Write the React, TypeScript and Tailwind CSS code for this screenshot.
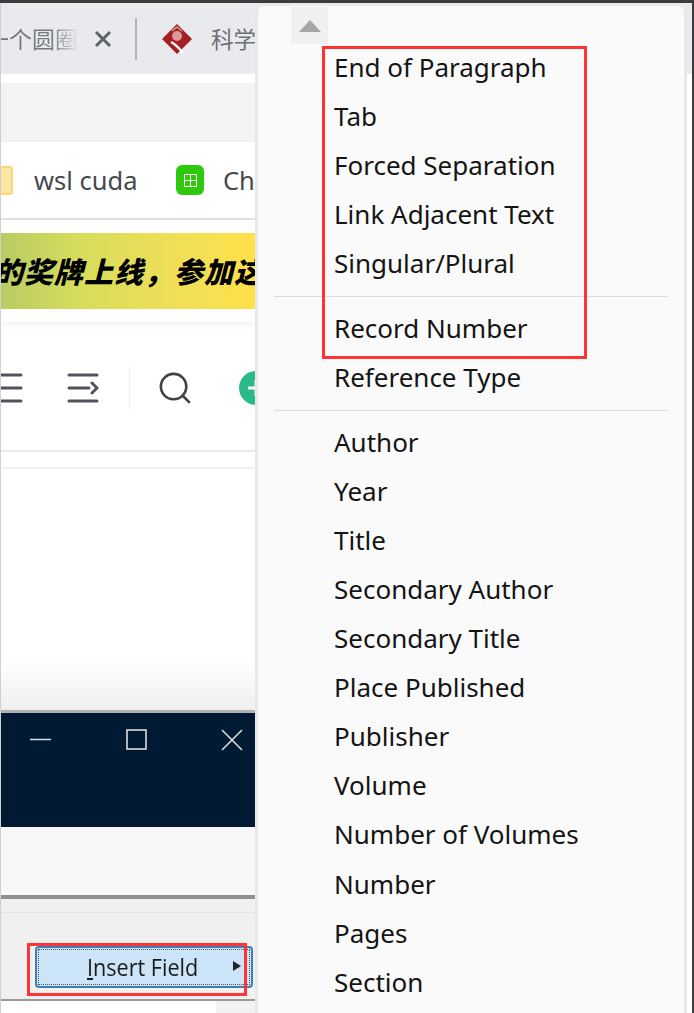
const GROUPS = [
  ["End of Paragraph", "Tab", "Forced Separation", "Link Adjacent Text", "Singular/Plural"],
  ["Record Number", "Reference Type"],
  [
    "Author",
    "Year",
    "Title",
    "Secondary Author",
    "Secondary Title",
    "Place Published",
    "Publisher",
    "Volume",
    "Number of Volumes",
    "Number",
    "Pages",
    "Section",
  ],
];

const CJK = "font-['Noto_Sans_CJK_SC',sans-serif]";

function TabBar() {
  return (
    <div className={"flex items-center h-[71px] bg-[#e8eaed] shrink-0 " + CJK}>
      <span className="ml-[-15px] w-[93px] shrink-0 overflow-hidden whitespace-nowrap bg-[linear-gradient(90deg,#75797e_70%,#e8eaed_100%)] bg-clip-text text-[23px] text-transparent">
        一个圆圈
      </span>
      <svg width="18" height="18" viewBox="0 0 18 18" className="ml-[15px] shrink-0 text-[#5f6368]">
        <path d="M2 2L16 16M16 2L2 16" stroke="currentColor" strokeWidth="3" />
      </svg>
      <div className="ml-[23px] h-[42px] w-[2px] bg-[#b3b5b8] shrink-0" />
      <svg width="32" height="32" viewBox="0 0 32 32" className="ml-[24px] shrink-0">
        <path d="M16 1 L31 16 L16 31 L1 16 Z" fill="#a31f24" />
        <circle cx="16" cy="13" r="5" fill="#d99a9c" />
        <path d="M11 8L16 4L21 8" stroke="#d99a9c" strokeWidth="1.5" fill="none" />
        <path d="M10 19 C14 21 18 25 22 30" stroke="#fff" strokeWidth="2.5" fill="none" />
      </svg>
      <span className="ml-[18px] whitespace-nowrap text-[22.5px] text-[#6d7075]">科学</span>
    </div>
  );
}

function Bookmarks() {
  return (
    <div className="flex items-center h-[78px] bg-white border-b-2 border-[#e0e0e0] shrink-0 font-['Noto_Sans',sans-serif]">
      <div className="ml-[-13px] h-[29px] w-[25px] rounded-[3px] border-2 border-[#fbd778] bg-[#fde7a4] shrink-0" />
      <span className="ml-[21px] w-[103px] text-[25.5px] text-[#45494f] whitespace-nowrap shrink-0">wsl cuda</span>
      <div className="ml-[39px] flex items-center justify-center h-[30px] w-[28px] rounded-[6px] bg-[#2ec90c] shrink-0">
        <div className="grid grid-cols-2 gap-px h-[13px] w-[13px] border border-white bg-white">
          <div className="bg-[#2ec90c]" />
          <div className="bg-[#2ec90c]" />
          <div className="bg-[#2ec90c]" />
          <div className="bg-[#2ec90c]" />
        </div>
      </div>
      <span className="ml-[19px] text-[25.5px] text-[#45494f]">Ch</span>
    </div>
  );
}

function Toolbar() {
  return (
    <div className="flex items-center h-[130px] pt-[4px] bg-white border-b-2 border-[#e8e8e8] shrink-0">
      <svg width="22" height="30" viewBox="0 0 22 30" className="shrink-0 text-[#50545a]">
        <path d="M0 2H20M0 15H20M0 28H20" stroke="currentColor" strokeWidth="3" strokeLinecap="round" />
      </svg>
      <svg width="32" height="30" viewBox="0 0 32 30" className="ml-[44px] shrink-0 text-[#50545a]">
        <path d="M2 2H30M2 15H22M2 28H30M25 10L30 15L25 20" stroke="currentColor" strokeWidth="3" strokeLinecap="round" fill="none" />
      </svg>
      <div className="ml-[30px] h-[42px] w-px bg-[#eeeeee] shrink-0" />
      <svg width="32" height="32" viewBox="0 0 34 34" className="ml-[29px] shrink-0 text-[#3f4348]">
        <circle cx="15.5" cy="15.5" r="13.5" stroke="currentColor" strokeWidth="2.8" fill="none" />
        <path d="M25 25L32 32" stroke="currentColor" strokeWidth="2.8" strokeLinecap="round" />
      </svg>
      <div className="ml-[48px] flex items-center justify-center h-[34px] w-[34px] rounded-full bg-[#2bb98a] shrink-0">
        <svg width="20" height="20" viewBox="0 0 20 20" className="text-white">
          <path d="M10 2V18M2 10H18" stroke="currentColor" strokeWidth="3" />
        </svg>
      </div>
    </div>
  );
}

function EditorWindow() {
  return (
    <>
      <div className="flex items-start h-[117px] bg-[#001a33] border-t-[3px] border-[#b0b0b0] text-[#dddddd] shrink-0 pl-[29px] pt-[16px]">
        <svg width="21" height="21" viewBox="0 0 21 21" className="shrink-0">
          <path d="M0 10.5H21" stroke="currentColor" strokeWidth="1.5" />
        </svg>
        <svg width="21" height="21" viewBox="0 0 21 21" className="ml-[75px] shrink-0">
          <rect x="1" y="1" width="19" height="19" stroke="currentColor" strokeWidth="1.6" fill="none" />
        </svg>
        <svg width="22" height="22" viewBox="0 0 22 22" className="ml-[74px] shrink-0">
          <path d="M1 1L21 21M21 1L1 21" stroke="currentColor" strokeWidth="1.6" />
        </svg>
      </div>
      <div className="h-[72px] bg-[#f7f7f7] border-b-4 border-[#909090] shrink-0" />
      <div className="h-[100px] bg-[#f0f0f0] shrink-0">
        <div className="h-[14px] border-b border-[#e4e4e4]" />
        <button className="relative ml-[34px] mt-[33px] flex items-center h-[42px] w-[218px] rounded-[4px] border-2 border-[#3d7fb8] bg-[#cce4f7] text-[#1a1a1a] text-[24px] font-['Open_Sans',sans-serif]">
          <span className="absolute inset-[1px] border border-dotted border-[#555555]" />
          <span className="ml-[50px] scale-x-[0.9] origin-left whitespace-nowrap">
            <span className="underline">I</span>nsert Field
          </span>
          <span className="absolute right-[10px] top-[13px] border-y-[5px] border-l-[8px] border-y-transparent border-l-[#222222]" />
        </button>
      </div>
      <div className="flex flex-1 border-t-2 border-[#999999] bg-[#f2f2f2] pr-[3px]">
        <div className="w-[215px] bg-white" />
      </div>
    </>
  );
}

function Browser() {
  return (
    <div className="flex flex-col h-full w-[255px] shrink-0 border-l border-[#d0d0d0] overflow-hidden bg-white">
      <TabBar />
      <div className="h-[9px] bg-white shrink-0" />
      <div className="h-[59px] bg-[#f1f3f4] shrink-0" />
      <Bookmarks />
      <div className="h-[13px] bg-white shrink-0" />
      <div className="flex items-center h-[76px] bg-[linear-gradient(90deg,#b9cc63_0%,#d6dc5c_30%,#f0df57_70%,#ffe04a_100%)] overflow-hidden shrink-0">
        <span className={"ml-[-7px] whitespace-nowrap text-[29px] tracking-[1px] font-black italic text-black " + CJK}>的奖牌上线，参加这</span>
      </div>
      <div className="relative h-[13px] bg-white shadow-[0_3px_6px_rgba(0,0,0,0.05)] shrink-0" />
      <Toolbar />
      <div className="h-[15px] bg-white shrink-0" />
      <div className="h-[2px] bg-[#f0f0f0] shrink-0" />
      <div className="h-[241px] shrink-0 bg-[linear-gradient(180deg,#ffffff_79%,#efefef_100%)]" />
      <EditorWindow />
    </div>
  );
}

function RightEdge() {
  return (
    <div className="flex flex-1 min-w-0">
      <div className="flex flex-1 flex-col">
        <div className="h-[71px] bg-[#e8eaed]" />
        <div className="flex-1 bg-white" />
      </div>
      <div className="w-[2px] bg-[#3c3c3c]" />
    </div>
  );
}

function FieldMenu() {
  return (
    <div className="absolute left-[255px] top-[6px] h-[1100px] w-[432px] rounded-t-[8px] bg-[#fafafa] border-x-[3px] border-[#e8e8e8] font-['Noto_Sans',sans-serif]">
      <div className="ml-[33px] mt-px flex h-[37px] w-[37px] items-center justify-center bg-[#f0f0f0]">
        <span className="border-x-[11px] border-b-[12px] border-x-transparent border-b-[#a6a6a6]" />
      </div>
      <div className="mt-[-1px]">
        {GROUPS.map((group, i) => (
          <div key={i} className={i > 0 ? "mt-[8px] mx-[16px] border-t border-[#dcdcdc] pt-[6.5px]" : ""}>
            {group.map((label) => (
              <div
                key={label}
                className={"flex h-[49.1px] items-center text-[26px] text-[#141414] whitespace-nowrap " + (i > 0 ? "pl-[60px]" : "pl-[76px]")}
              >
                {label}
              </div>
            ))}
          </div>
        ))}
      </div>
    </div>
  );
}

export default function App() {
  return (
    <div className="relative flex h-[1013px] w-[694px] flex-col overflow-hidden bg-white">
      <div className="h-[3px] bg-[#3c3c3c] shrink-0" />
      <div className="flex flex-1 min-h-0">
        <Browser />
        <RightEdge />
      </div>
      <FieldMenu />
      <div className="absolute left-[322px] top-[46px] h-[313px] w-[265px] border-[3px] border-[#ff3333]" />
      <div className="absolute left-[27px] top-[943px] h-[53px] w-[220px] border-[3px] border-[#ff3333]" />
    </div>
  );
}
